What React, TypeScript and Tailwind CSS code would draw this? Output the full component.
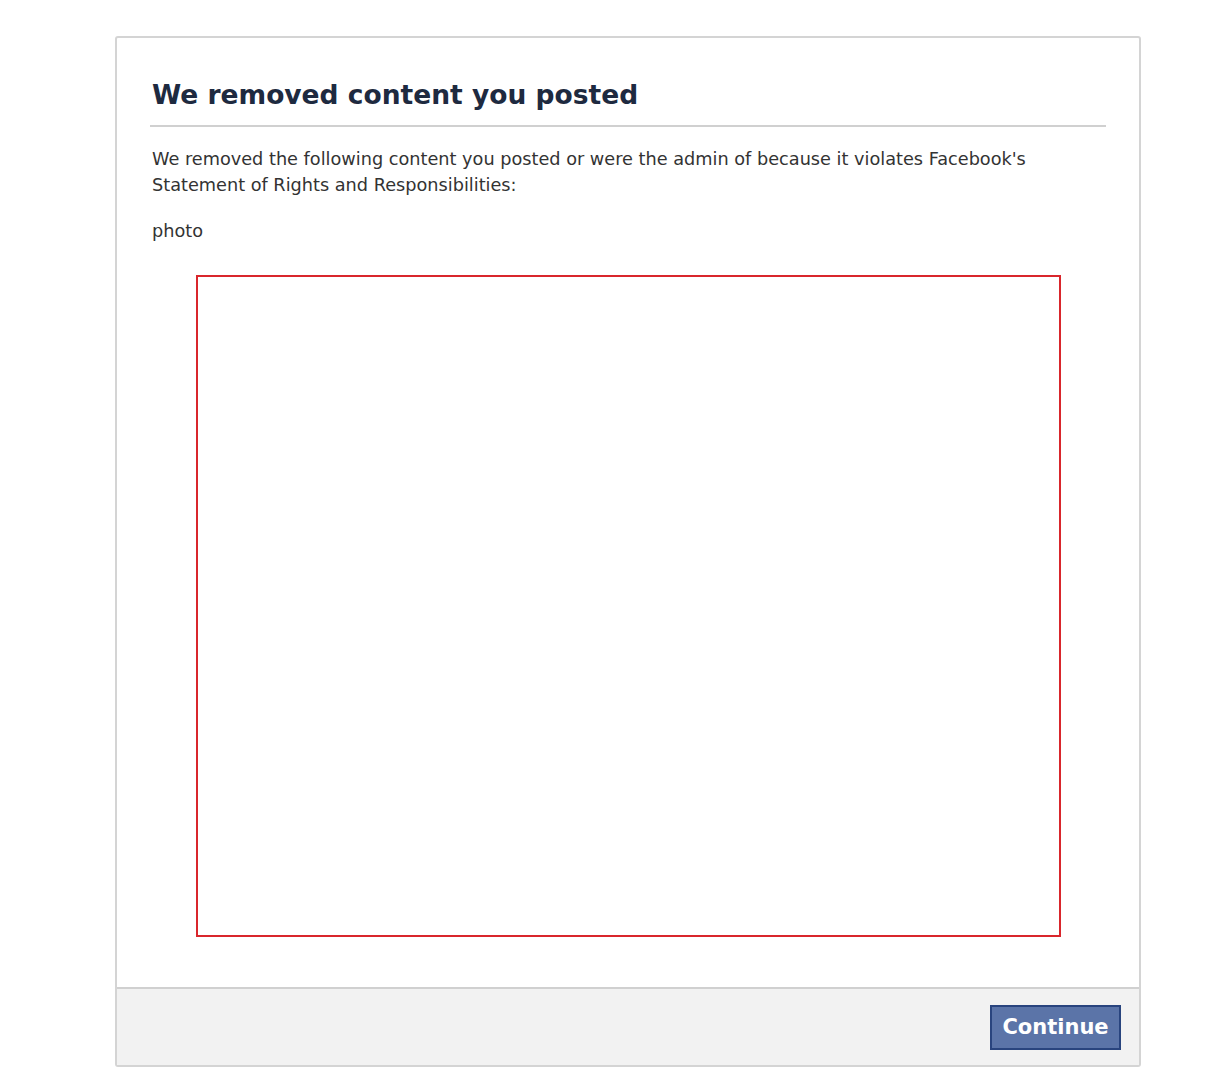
export default function App() {
  return (
    <div className="min-h-[1080px] w-[1211px] bg-white pt-[36px] pl-[115px]">
      <div className="flex h-[1031px] w-[1026px] flex-col overflow-hidden rounded-[3px] border-2 border-[#d4d4d4] bg-white">
        <div className="flex-1 px-[33px] pt-[38px]">
          <h1
            className="border-b-2 border-[#d0d0d0] pb-[12px] pl-[2px] text-[26.5px] font-bold leading-[37px] text-[#1e2a40]"
            style={{ fontFamily: '"DejaVu Sans", Verdana, sans-serif' }}
          >
            We removed content you posted
          </h1>
          <div
            className="pl-[2px] pt-[19px] text-[17.7px] leading-[26px] text-[#333333]"
            style={{ fontFamily: '"DejaVu Sans", Tahoma, sans-serif' }}
          >
            <p className="whitespace-nowrap">
              We removed the following content you posted or were the admin of because it violates Facebook's
              <br />
              Statement of Rights and Responsibilities:
            </p>
            <p className="pt-[20px]">photo</p>
          </div>
          <div className="ml-[46px] mt-[31px] h-[662px] w-[865px] border-2 border-[#d9262c]" />
        </div>
        <div className="flex h-[78px] items-start justify-end border-t-2 border-[#d0d0d0] bg-[#f2f2f2] pr-[18px] pt-[16px]">
          <button
            className="h-[45px] w-[131px] border-2 border-[#29447e] bg-[#5b74a8] text-[21px] font-bold text-white"
            style={{ fontFamily: '"DejaVu Sans", Verdana, sans-serif' }}
          >
            Continue
          </button>
        </div>
      </div>
    </div>
  );
}
